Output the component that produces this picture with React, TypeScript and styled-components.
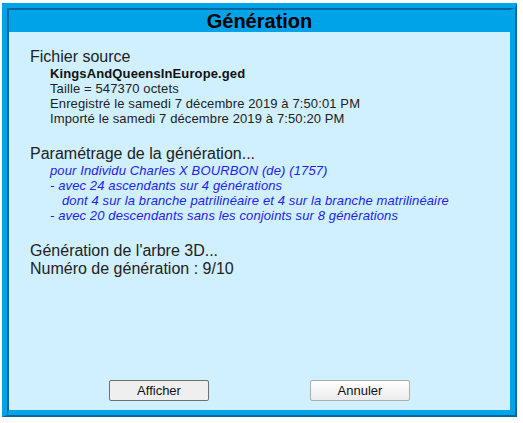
import React from "react";
import styled, { createGlobalStyle } from "styled-components";

const GlobalStyle = createGlobalStyle`
  html, body {
    margin: 0;
    padding: 0;
    background: #ffffff;
  }
  body {
    font-family: "Liberation Sans", Arial, sans-serif;
  }
`;

const Page = styled.div`
  padding: 3px 0 0 2px;
`;

const Frame = styled.div`
  width: 515px;
  height: 414px;
  box-sizing: border-box;
  border-style: solid;
  border-width: 5px 2px 2px 5px;
  border-color: #00a2e8 #00689a #00689a #00a2e8;
`;

const Dialog = styled.div`
  height: 100%;
  box-sizing: border-box;
  border-style: solid;
  border-width: 2px 5px 5px 2px;
  border-color: #00689a #00a2e8 #00a2e8 #00689a;
  background: #d0f0ff;
  display: flex;
  flex-direction: column;
`;

const TitleBar = styled.div`
  height: 22px;
  background: #00a2e8;
  color: #000;
  font-size: 20px;
  font-weight: bold;
  line-height: 22px;
  text-align: center;
`;

const Body = styled.div`
  flex: 1;
  padding: 16px 0 0 21px;
  color: #222;
`;

const Section = styled.div`
  & + & {
    margin-top: 19px;
  }
`;

const Heading = styled.div`
  font-size: 16px;
  line-height: 18px;
`;

const Detail = styled.div<{ $bold?: boolean; $indent?: number }>`
  font-size: 13px;
  line-height: 15px;
  letter-spacing: 0.12px;
  padding-left: ${(p) => 20 + (p.$indent ?? 0)}px;
  font-weight: ${(p) => (p.$bold ? "bold" : "normal")};
  color: ${(p) => (p.$bold ? "#111" : "#222")};
`;

const Param = styled(Detail)`
  font-style: italic;
  color: #2222ee;
`;

const Footer = styled.div`
  display: flex;
  justify-content: center;
  gap: 101px;
  padding-bottom: 9px;
`;

const Button = styled.button<{ $primary?: boolean }>`
  width: 100px;
  height: 21px;
  padding: 0;
  font-family: "Liberation Sans", Arial, sans-serif;
  font-size: 13px;
  color: #111;
  border-radius: 2px;
  border: 1px solid ${(p) => (p.$primary ? "#6f6f6f" : "#adadad")};
  background: ${(p) =>
    p.$primary ? "#efefef" : "linear-gradient(#ffffff, #ececec)"};
`;

export default function App() {
  return (
    <Page>
      <GlobalStyle />
      <Frame>
        <Dialog>
          <TitleBar>Génération</TitleBar>
          <Body>
            <Section>
              <Heading>Fichier source</Heading>
              <Detail $bold>KingsAndQueensInEurope.ged</Detail>
              <Detail>Taille = 547370 octets</Detail>
              <Detail>Enregistré le samedi 7 décembre 2019 à 7:50:01 PM</Detail>
              <Detail>Importé le samedi 7 décembre 2019 à 7:50:20 PM</Detail>
            </Section>
            <Section>
              <Heading>Paramétrage de la génération...</Heading>
              <Param>pour Individu Charles X BOURBON (de) (1757)</Param>
              <Param>- avec 24 ascendants sur 4 générations</Param>
              <Param $indent={12}>
                dont 4 sur la branche patrilinéaire et 4 sur la branche matrilinéaire
              </Param>
              <Param>- avec 20 descendants sans les conjoints sur 8 générations</Param>
            </Section>
            <Section>
              <Heading>Génération de l'arbre 3D...</Heading>
              <Heading>Numéro de génération : 9/10</Heading>
            </Section>
          </Body>
          <Footer>
            <Button $primary>Afficher</Button>
            <Button>Annuler</Button>
          </Footer>
        </Dialog>
      </Frame>
    </Page>
  );
}
